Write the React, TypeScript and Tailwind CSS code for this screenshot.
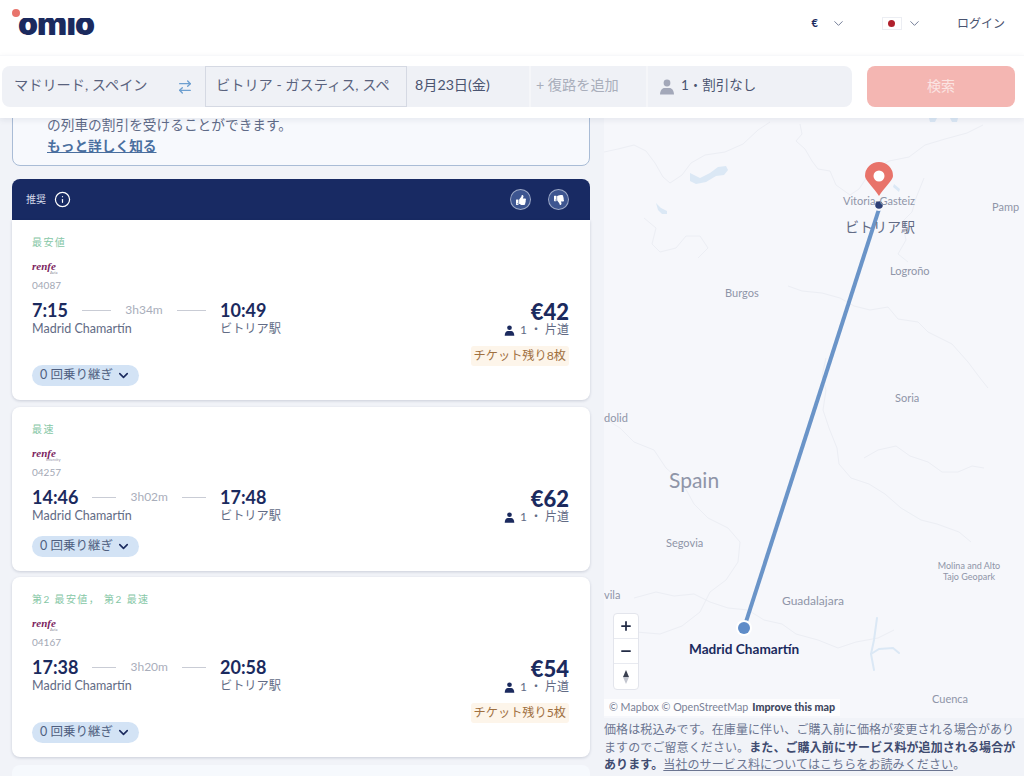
import { ArrowRightLeft, ChevronDown, Info, Plus, Minus } from "lucide-react";
import { FaThumbsUp, FaThumbsDown } from "react-icons/fa";

function Person({ className }: { className: string }) {
  return (
    <svg viewBox="0 0 16 16" className={className} fill="currentColor">
      <circle cx="8" cy="4" r="3.4" />
      <path d="M1 15.5c0-4 2.2-6.6 4.6-6.6h4.8c2.4 0 4.6 2.6 4.6 6.6z" />
    </svg>
  );
}

function Renfe({ sub }: { sub: string }) {
  return (
    <div className="relative h-[20px] w-[40px]">
      <span className="block pt-[2px] text-[11px] leading-[12px] font-bold italic text-[#7d1f5f] [font-family:'Liberation_Serif',serif]">renfe</span>
      <span className={sub === "Intercity" ? "absolute left-[14px] top-[12px] text-[4px] leading-[5px] text-[#8c8c9c]" : "absolute left-[18px] top-[12px] text-[4px] leading-[5px] text-[#8c8c9c]"}>{sub}</span>
    </div>
  );
}

type CardProps = {
  label: string;
  sub: string;
  code: string;
  dep: string;
  arr: string;
  dur: string;
  price: string;
  badge?: string;
  wrap: string;
};

function Card({ label, sub, code, dep, arr, dur, price, badge, wrap }: CardProps) {
  return (
    <div className={wrap}>
      <div className="h-[15px] text-[10px] leading-[14px] tracking-[1.4px] text-[#86c7a6]">{label}</div>
      <div className="mt-[8px]"><Renfe sub={sub} /></div>
      <div className="mt-px h-[12px] text-[10px] leading-[12px] text-[#a3a8b5]">{code}</div>
      <div className="mt-[9px] flex justify-between">
        <div>
          <div className="flex h-[20px] items-center">
            <div className="flex w-[174px] items-center">
              <span className="text-[18px] leading-[20px] font-bold text-[#1b2a5e]">{dep}</span>
              <span className="ml-[14px] h-px flex-1 bg-[#c9ccd5]" />
              <span className="px-[14px] text-[12px] text-[#a9aebb]">{dur}</span>
              <span className="h-px flex-1 bg-[#c9ccd5]" />
            </div>
            <span className="ml-[14px] text-[18px] leading-[20px] font-bold text-[#1b2a5e]">{arr}</span>
          </div>
          <div className="flex h-[16px] items-center pt-px text-[12.5px] leading-[15px] text-[#626b85]">
            <span className="w-[188px]">Madrid Chamartín</span>
            <span className="text-[12.2px]">ビトリア駅</span>
          </div>
        </div>
        <div className="flex flex-col items-end">
          <div className="mt-px h-[21px] text-[22px] leading-[21px] font-black text-[#1b2a5e]">{price}</div>
          <div className="flex h-[16px] items-center text-[12px] text-[#626b85]">
            <Person className="mr-[5px] h-[11px] w-[11px] text-[#1b2a5e]" />
            <span>1 ・ 片道</span>
          </div>
          {badge && (
            <div className="mt-[8px] flex h-[20px] items-center rounded-[3px] bg-[#fdf5ea] px-[3px] text-[12.2px] text-[#a0703f]">{badge}</div>
          )}
        </div>
      </div>
      <div className={badge ? "-mt-px flex" : "mt-[11px] flex"}>
        <div className="flex h-[21px] w-[107px] items-center justify-center gap-[3px] rounded-full bg-[#d3e3f5] text-[12.5px] text-[#4f5f80]">
          <span>0 回乗り継ぎ</span>
          <ChevronDown className="h-[15px] w-[15px] text-[#1b2a5e]" strokeWidth={2.5} />
        </div>
      </div>
    </div>
  );
}

const lbl = "absolute whitespace-nowrap text-[#8f95a8]";

export default function App() {
  return (
    <div className="flex h-[776px] w-[1024px] flex-col overflow-hidden bg-[#f1f3f8] [font-family:Lato,'Noto_Sans_CJK_JP',sans-serif]">
      <header className="flex h-[55px] items-center bg-white pb-[8px] pr-[19px]">
        <div className="relative ml-[18px] mt-[4px] h-[26px] w-[75px]">
          <span className="absolute left-[-6px] top-[-4px] z-10 h-[8px] w-[8px] rounded-full bg-[#e8746c]" />
          <span className="absolute left-0 top-[-8px] block text-[32px] leading-[38px] font-black tracking-[-0.9px] text-[#1b2a5e] [font-family:Inter,sans-serif]">omio</span>
          <span className="absolute left-0 top-[-8px] h-[13px] w-[80px] bg-white" />
        </div>
        <div className="flex-1" />
        <span className="text-[11px] font-bold text-[#1b2a5e]">€</span>
        <ChevronDown className="ml-[13px] h-[15px] w-[15px] text-[#6b7591]" strokeWidth={1.5} />
        <div className="ml-[36px] flex h-[13px] w-[20px] items-center justify-center border border-[#eceef3] bg-white">
          <span className="h-[7px] w-[7px] rounded-full bg-[#b0202c]" />
        </div>
        <ChevronDown className="ml-[5px] h-[15px] w-[15px] text-[#6b7591]" strokeWidth={1.5} />
        <span className="ml-[35px] text-[12px] text-[#4a5470]">ログイン</span>
      </header>

      <div className="relative z-10 flex h-[63px] items-center bg-white pl-[2px] pr-[9px] shadow-[0_2px_6px_rgba(30,40,80,0.08),inset_0_1px_0_#f7f8fa]">
        <div className="flex h-[41px] w-[850px] items-stretch overflow-hidden rounded-[8px] bg-[#eff1f6] text-[14.2px] text-[#59627d]">
          <div className="flex w-[203px] items-center justify-between pb-[3px] pl-[12px] pr-[12px]">
            <span>マドリード, スペイン</span>
            <ArrowRightLeft className="mt-[3px] h-[16px] w-[16px] text-[#6d9fd0]" strokeWidth={2} />
          </div>
          <div className="flex w-[202px] items-center overflow-hidden border border-[#d5d9e3] pb-[3px] pl-[10px]">
            <span className="w-[176px] overflow-hidden whitespace-nowrap">ビトリア - ガスティス, スペ</span>
          </div>
          <div className="flex w-[120px] items-center pb-[3px] pl-[8px] text-[#4a5470]">8月23日(金)</div>
          <div className="ml-[2px] flex w-[119px] items-center border-x-2 border-x-white/40 pb-[3px] pl-[5px] text-[#a9aebb]">+ 復路を追加</div>
          <div className="flex flex-1 items-center pb-[3px] pl-[11px] text-[#4a5470]">
            <Person className="mr-[6px] mt-[3px] h-[16px] w-[16px] text-[#a3a8b9]" />
            <span className="text-[13.5px]">1・割引なし</span>
          </div>
        </div>
        <div className="ml-[15px] flex h-[41px] w-[148px] items-center justify-center rounded-[8px] bg-[#f4b6b2] pb-[3px] text-[14px] text-[#fbe4e2]">検索</div>
      </div>

      <div className="flex min-h-0 flex-1">
        <div className="w-[604px] shrink-0 overflow-hidden pl-[12px] pr-[14px]">
          <div className="-mt-px rounded-b-[8px] border border-[#a9bcd6] bg-[#f7f9fd] pb-[9px] pl-[34px]">
            <div className="h-[14px] text-[13.7px] leading-[14px] text-[#5f6b88]">の列車の割引を受けることができます。</div>
            <div className="mt-[3px] h-[21px] text-[13.7px] leading-[21px] font-bold text-[#4a6f9f] underline">もっと詳しく知る</div>
          </div>
          <div className="mt-[13px] flex h-[41px] items-center rounded-t-[8px] bg-[#182a63] pl-[14px] pr-[21px] text-white">
            <span className="text-[10px] text-[#d5daea]">推奨</span>
            <Info className="ml-[8px] h-[17px] w-[17px]" strokeWidth={1.7} />
            <div className="flex-1" />
            <div className="flex h-[21px] w-[21px] items-center justify-center rounded-full border border-white/50 bg-[#3d5590]"><FaThumbsUp className="h-[10px] w-[10px]" /></div>
            <div className="ml-[17px] flex h-[21px] w-[21px] items-center justify-center rounded-full border border-white/50 bg-[#3d5590]"><FaThumbsDown className="h-[10px] w-[10px]" /></div>
          </div>
          <Card wrap="rounded-b-[8px] bg-white pb-[14px] pl-[20px] pr-[21px] pt-[15px] shadow-[0_1px_3px_rgba(30,40,80,0.18)]" label="最安値" sub="Avia" code="04087" dep="7:15" arr="10:49" dur="3h34m" price="€42" badge="チケット残り8枚" />
          <Card wrap="mt-[7px] rounded-[8px] bg-white pb-[14px] pl-[20px] pr-[21px] pt-[15px] shadow-[0_1px_3px_rgba(30,40,80,0.18)]" label="最速" sub="Intercity" code="04257" dep="14:46" arr="17:48" dur="3h02m" price="€62" />
          <Card wrap="mt-[6px] rounded-[8px] bg-white pb-[14px] pl-[20px] pr-[21px] pt-[15px] shadow-[0_1px_3px_rgba(30,40,80,0.18)]" label="第2 最安値， 第2 最速" sub="Avia" code="04167" dep="17:38" arr="20:58" dur="3h20m" price="€54" badge="チケット残り5枚" />
          <div className="mt-[8px] h-[60px] rounded-[8px] bg-[#f6f9fd]" />
        </div>

        <div className="flex min-w-0 flex-1 flex-col">
          <div className="relative h-[600px] overflow-hidden bg-[#f6f7fb] text-[11px]">
            <svg viewBox="0 0 420 600" className="absolute inset-0 h-full w-full" fill="none">
              <g stroke="#eceef4" strokeWidth="1" strokeLinejoin="round">
                <path d="M0 34l14 -3 16 -4 12 6 9 12 8 14 7 6 12 -8 9 -12 14 -8 20 -3 18 -8 15 -14 12 -8" />
                <path d="M196 6l2 10 -6 7 9 8 7 12 6 8 12 2 6 14 14 10 9 -6 12 -18 18 -10 20 -4 16 -12 20 -6 22 -6 16 -8" />
                <path d="M184 168l14 5 20 2 18 5 14 8 16 4 18 -3 10 12 20 3 10 10 24 12 16 18 12 16 8 10" />
                <path d="M222 240l-4 18 4 14 -3 20 6 18 8 20 2 16 12 14 18 6 16 10 16 14 20 12 16 4 22 8 12 10" />
                <path d="M0 300l16 10 14 14 20 8 12 18 16 14 12 22 14 14 20 10 12 14 -2 20 -12 18 -16 12 -10 20 -18 14 -22 8 -24 -2 -20 -6" />
                <path d="M30 480l22 -6 18 4 20 -2 16 8 18 6 20 2 16 10 18 4 14 10 22 6 20 8 18 -6 22 -4 16 -8" />
                <path d="M260 340l14 -8 18 -4 14 10 18 6 14 10 16 0 14 -6 12 2" />
                <path d="M40 100l12 10 -4 16 8 8 16 -4 10 -12 14 0 8 12 -10 10" />
                <path d="M320 60l-8 20 -4 14 -10 10 4 18 -8 14 10 8" />
              </g>
              <g fill="#dbe8f5">
                <path d="M86 55l10 5 10 -5 8 -6 8 -1 2 4 -4 5 -8 1 -10 6 -10 2 -6 -3z" />
                <path d="M52 85l5 5 6 3 0 3 -5 0 -4 -4z" />
                <path d="M290 66l6 5 -1 3 -6 -5z" />
                <path d="M325 0l8 0 -2 4 -5 0z" />
                <path d="M346 0l8 0 -1 4 -5 0z" />
              </g>
              <g stroke="#dbe8f5" strokeWidth="2" strokeLinecap="round">
                <path d="M273 500l-3 22 -3 14 3 16" />
                <path d="M267 536l8 -5 14 -1 6 5" />
              </g>
              <line x1="275" y1="91" x2="140" y2="510" stroke="#6a94c8" strokeWidth="4" />
              <circle cx="275" cy="87" r="6" fill="#f6f7fb" />
              <circle cx="275" cy="87" r="3.8" fill="#2e3f75" />
              <circle cx="140" cy="510" r="8" fill="#ffffff" />
              <circle cx="140" cy="510" r="6" fill="#5f8cc8" />
              <path d="M275 78 C270 70 261 62 261 58 A14 14 0 1 1 289 58 C289 62 280 70 275 78Z" fill="#e8736a" />
              <circle cx="275" cy="58" r="5.5" fill="#ffffff" />
            </svg>
            <span className={`${lbl} left-[239px] top-[75px]`}>Vitoria-Gasteiz</span>
            <span className={`${lbl} left-[241px] top-[98px] text-[14px] text-[#626b85]`}>ビトリア駅</span>
            <span className={`${lbl} left-[388px] top-[81px]`}>Pamp</span>
            <span className={`${lbl} left-[286px] top-[145px]`}>Logroño</span>
            <span className={`${lbl} left-[121px] top-[167px]`}>Burgos</span>
            <span className={`${lbl} left-[291px] top-[272px]`}>Soria</span>
            <span className={`${lbl} left-0 top-[292px]`}>dolid</span>
            <span className={`${lbl} left-[65px] top-[346px] text-[21px] text-[#7d8499]`}>Spain</span>
            <span className={`${lbl} left-[62px] top-[417px]`}>Segovia</span>
            <span className={`${lbl} left-0 top-[469px]`}>vila</span>
            <span className={`${lbl} left-[178px] top-[474px] text-[12px]`}>Guadalajara</span>
            <span className={`${lbl} left-[333px] top-[442px] w-[64px] text-center text-[9px] leading-[11px]`} style={{ whiteSpace: "normal" }}>Molina and Alto Tajo Geopark</span>
            <span className={`${lbl} left-[328px] top-[573px]`}>Cuenca</span>
            <span className="absolute left-[85px] top-[521px] whitespace-nowrap text-[13.6px] font-bold text-[#1b2a5e]">Madrid Chamartín</span>
            <div className="absolute left-[9px] top-[495px] flex h-[77px] w-[26px] flex-col rounded-[4px] border border-[#e3e5ec] bg-white text-[#222b45]">
              <div className="flex h-[25px] items-center justify-center border-b border-[#e8eaf0]"><Plus className="h-[14px] w-[14px]" strokeWidth={3} /></div>
              <div className="flex h-[25px] items-center justify-center border-b border-[#e8eaf0]"><Minus className="h-[14px] w-[14px]" strokeWidth={3} /></div>
              <div className="flex flex-1 flex-col items-center justify-center">
                <span className="h-0 w-0 border-x-[3.5px] border-b-[7px] border-x-transparent border-b-[#3a4050]" />
                <span className="h-0 w-0 border-x-[3.5px] border-t-[7px] border-x-transparent border-t-[#c3c6cf]" />
              </div>
            </div>
            <div className="absolute bottom-[2px] left-0 flex h-[17px] items-center gap-[4px] bg-white/80 pl-[5px] pr-[5px] text-[10.7px] text-[#7a8196]">
              <span>© Mapbox © OpenStreetMap</span>
              <span className="font-black text-[#3f4760]">Improve this map</span>
            </div>
          </div>
          <div className="pr-[4px] pt-[3px] text-[12px] leading-[17.5px] tracking-[0.1px] text-[#6b7591]">
            価格は税込みです。在庫量に伴い、ご購入前に価格が変更される場合がありますのでご留意ください。<b className="font-bold text-[#3f4b70]">また、ご購入前にサービス料が追加される場合があります。</b><span className="underline">当社のサービス料についてはこちらをお読みください</span>。
          </div>
        </div>
      </div>
    </div>
  );
}
